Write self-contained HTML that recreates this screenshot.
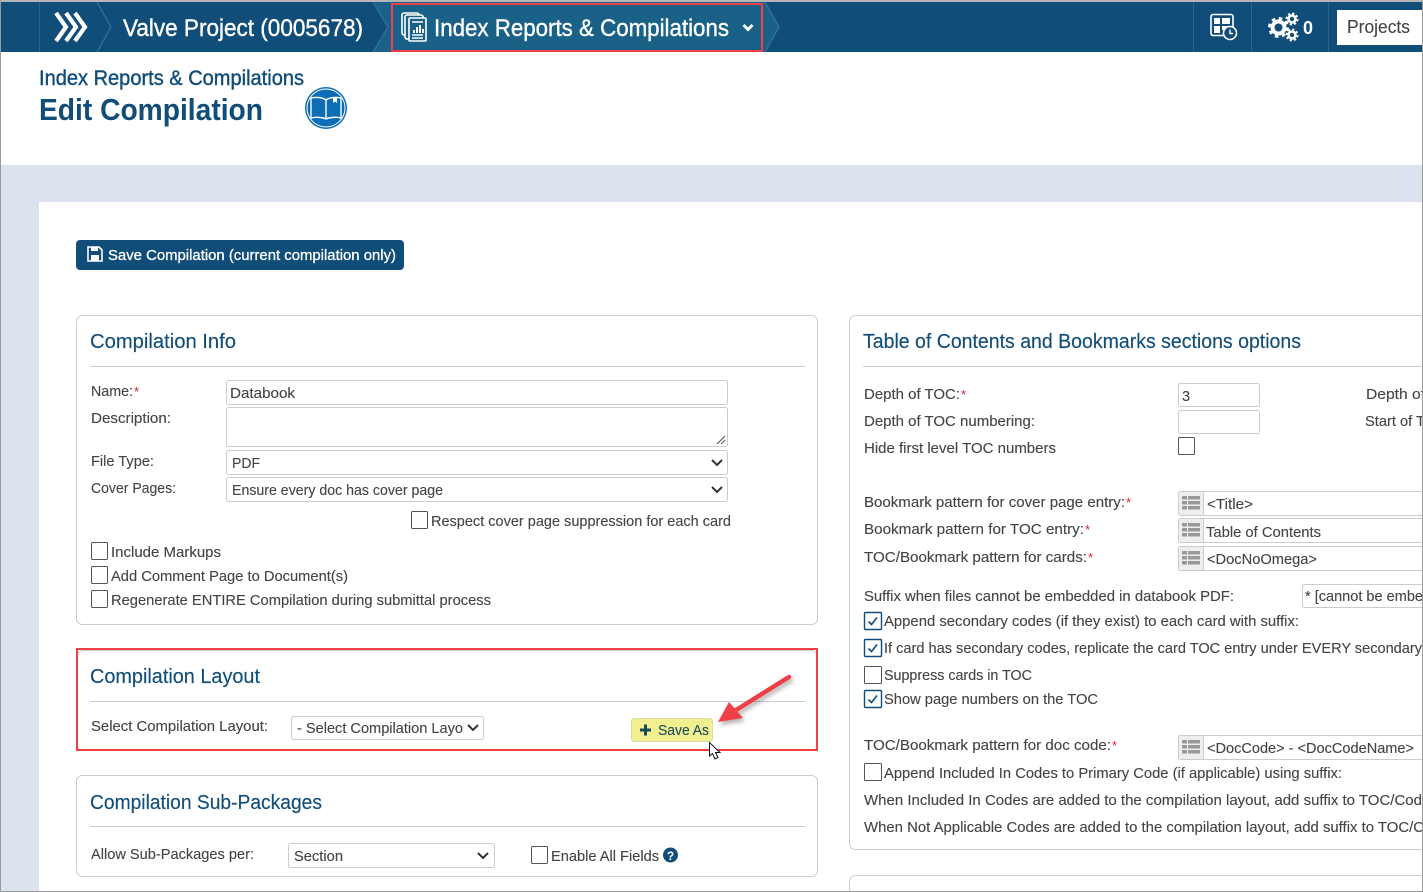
<!DOCTYPE html>
<html lang="en"><head><meta charset="utf-8"><title>Edit Compilation</title>
<style>
html,body{margin:0;padding:0;background:#fff;width:1423px;height:892px;overflow:hidden}
svg{display:block}
text{font-family:"Liberation Sans",Arial,sans-serif;font-size:14.5px;fill:#444;white-space:pre;stroke:#444;stroke-width:.12px}
.t{font-size:20.5px;fill:#114d79;stroke:#114d79;stroke-width:.15px}
.nav{font-size:24.5px;fill:#fff;stroke:#fff;stroke-width:.4px}
.r{fill:#d9232e;stroke:none;font-size:13px}
.i{fill:#fff;stroke:#ccc;stroke-width:1}
.c{fill:#fff;stroke:#555;stroke-width:1}
.k{fill:#fff;stroke:#114d79;stroke-width:1.4}
.h{stroke:#ccc;stroke-width:1}
.card{fill:#fff;stroke:#ccc;stroke-width:1}
.ck{fill:none;stroke:#114d79;stroke-width:1.6}
.ch{fill:none;stroke:#333;stroke-width:2}
</style></head><body>
<svg width="1423" height="892" viewBox="0 0 1423 892" xmlns="http://www.w3.org/2000/svg">
<defs>
<filter id="sh" x="-30%" y="-30%" width="170%" height="170%"><feDropShadow dx="2" dy="3" stdDeviation="2" flood-color="#000" flood-opacity=".3"/></filter>
<g id="ic"><path d="M4 5h5v3.500h-5zM10 5h12v3.500h-12zM4 10h5v3.500h-5zM10 10h12v3.500h-12zM4 15h5v3.500h-5zM10 15h12v3.500h-12z" fill="#999"/></g>
</defs>

<rect width="1423" height="892" fill="#fff"/>
<rect x="0" y="165" width="1423" height="727" fill="#dce3ee"/>
<rect x="39" y="202" width="1384" height="690" fill="#fff"/>

<!-- nav -->
<rect x="0" y="2" width="1423" height="50" fill="#114d79"/>
<path d="M373 2L388 27L373 52H765L779 27L765 2Z" fill="#1a6187"/>
<path d="M39.500 2V52M1193.500 2V52M1251.500 2V52M1328.500 2V52" stroke="#2d6590" stroke-width="1" fill="none"/>
<path d="M97 2L111 27L97 52M373 2L388 27L373 52M765 2L779 27L765 52" stroke="#32719e" stroke-width="1.300" fill="none"/>
<path d="M56 13L66 27L56 41M66 13L76 27L66 41M75 13L85 27L75 41" stroke="#fff" stroke-width="4.200" fill="none"/>
<text class="nav" x="123" y="36" textLength="240" lengthAdjust="spacingAndGlyphs">Valve Project (0005678)</text>
<g fill="#1a6187" stroke="#fff" stroke-width="1.600">
<rect x="402" y="13" width="17" height="22" rx="2"/>
<rect x="405" y="15" width="18" height="24" rx="2"/>
<rect x="409" y="18" width="17" height="23" rx="1"/>
</g>
<path d="M412 22h11M412 35h11M412 38h11" stroke="#fff" stroke-width="1.500"/>
<path d="M413 33v-3h2v3zM416 33v-6h2v6zM419 33v-8h2v8zM422 33v-4h2v4z" fill="#fff"/>
<text class="nav" x="434" y="36" textLength="295" lengthAdjust="spacingAndGlyphs">Index Reports &amp; Compilations</text>
<path d="M743.500 25L748 29.500L752.500 25" stroke="#fff" stroke-width="2.800" fill="none"/>
<rect x="392" y="4" width="370" height="47" fill="none" stroke="#ef4048" stroke-width="2"/>

<!-- nav right -->
<rect x="1211" y="14.500" width="22" height="21" rx="2" fill="none" stroke="#fff" stroke-width="1.600"/>
<path d="M1214 18h6v6h-6zM1222 18h8v6h-8zM1214 26h6v7h-6zM1222 26h5v4h-5z" fill="#fff"/>
<circle cx="1230" cy="33" r="6.500" fill="#114d79" stroke="#fff" stroke-width="1.600"/>
<path d="M1230 29.500V33.500H1233" stroke="#fff" stroke-width="1.400" fill="none"/>
<g fill="none" stroke="#fff">
<circle cx="1278.500" cy="27.500" r="6" stroke-width="4"/>
<circle cx="1278.500" cy="27.500" r="9" stroke-width="3" stroke-dasharray="3.500 3.570"/>
<circle cx="1292" cy="19" r="3.500" stroke-width="2.600"/>
<circle cx="1292" cy="19" r="5.500" stroke-width="2" stroke-dasharray="2.200 2.120"/>
<circle cx="1292" cy="35" r="3.500" stroke-width="2.600"/>
<circle cx="1292" cy="35" r="5.500" stroke-width="2" stroke-dasharray="2.200 2.120"/>
</g>
<text x="1303" y="34" style="font-size:18px;font-weight:bold;fill:#fff;stroke:none" textLength="10" lengthAdjust="spacingAndGlyphs">0</text>
<rect x="1337" y="10" width="86" height="35" fill="#fff"/>
<text x="1347" y="33" style="font-size:18px" textLength="63" lengthAdjust="spacingAndGlyphs">Projects</text>

<!-- page title -->
<text x="39" y="85" style="font-size:21.500px;fill:#114d79;stroke:#114d79;stroke-width:.4px" textLength="265" lengthAdjust="spacingAndGlyphs">Index Reports &amp; Compilations</text>
<text x="39" y="120" style="font-size:31px;font-weight:bold;fill:#114d79;stroke:none" textLength="224" lengthAdjust="spacingAndGlyphs">Edit Compilation</text>
<circle cx="326" cy="108" r="21" fill="#0d6db5"/>
<circle cx="326" cy="108" r="19" fill="none" stroke="#fff" stroke-width="1"/>
<path d="M326 100C322 97 315 97 311 98V118C315 117 322 117 326 119C330 117 337 117 341 118V98C337 97 330 97 326 100V119" fill="none" stroke="#fff" stroke-width="1.400"/>
<path d="M333 98v5l2-1.500 2 1.500v-5" fill="#fff"/>

<!-- save button -->
<rect x="76" y="240" width="328" height="30" rx="4" fill="#114d79"/>
<path d="M88 247h11l3 3v11h-14z" fill="none" stroke="#fff" stroke-width="1.600"/>
<path d="M91 247h7v4h-7zM91 255h8v6h-8z" fill="#fff"/>
<text x="108" y="260" style="font-size:15px;fill:#fff;stroke:#fff;stroke-width:.3px" textLength="288" lengthAdjust="spacingAndGlyphs">Save Compilation (current compilation only)</text>

<!-- card 1 -->
<rect class="card" x="76.500" y="315.500" width="741" height="309" rx="6"/>
<text class="t" x="90" y="348" textLength="146" lengthAdjust="spacingAndGlyphs">Compilation Info</text>
<line class="h" x1="90" x2="805" y1="366.500" y2="366.500"/>
<text x="91" y="396" textLength="42" lengthAdjust="spacingAndGlyphs">Name:</text><text class="r" x="134" y="396">*</text>
<text x="91" y="423" textLength="80" lengthAdjust="spacingAndGlyphs">Description:</text>
<text x="91" y="466" textLength="63" lengthAdjust="spacingAndGlyphs">File Type:</text>
<text x="91" y="493" style="font-size:15px" textLength="85" lengthAdjust="spacingAndGlyphs">Cover Pages:</text>
<rect class="i" x="226.500" y="380.500" width="501" height="24" rx="2"/>
<text x="230" y="398" textLength="65" lengthAdjust="spacingAndGlyphs">Databook</text>
<rect class="i" x="226.500" y="407.500" width="501" height="39" rx="2"/>
<path d="M717 444L725 436M721 444L725 440" stroke="#555" stroke-width="1"/>
<rect class="i" x="226.500" y="450.500" width="501" height="24" rx="2"/>
<text x="232" y="468" textLength="28" lengthAdjust="spacingAndGlyphs">PDF</text>
<path class="ch" d="M712 460L717 465L722 460"/>
<rect class="i" x="226.500" y="477.500" width="501" height="24" rx="2"/>
<text x="232" y="495" textLength="211" lengthAdjust="spacingAndGlyphs">Ensure every doc has cover page</text>
<path class="ch" d="M712 487L717 492L722 487"/>
<rect class="c" x="411.500" y="511.500" width="16" height="17" rx="1"/>
<text x="431" y="526" textLength="300" lengthAdjust="spacingAndGlyphs">Respect cover page suppression for each card</text>
<rect class="c" x="91.500" y="542.500" width="16" height="17" rx="1"/>
<text x="111" y="557" textLength="110" lengthAdjust="spacingAndGlyphs">Include Markups</text>
<rect class="c" x="91.500" y="566.500" width="16" height="17" rx="1"/>
<text x="111" y="581" textLength="237" lengthAdjust="spacingAndGlyphs">Add Comment Page to Document(s)</text>
<rect class="c" x="91.500" y="590.500" width="16" height="17" rx="1"/>
<text x="111" y="605" textLength="380" lengthAdjust="spacingAndGlyphs">Regenerate ENTIRE Compilation during submittal process</text>

<!-- card 2 -->
<rect class="card" x="77.500" y="650.500" width="740" height="100" rx="6"/>
<text class="t" x="90" y="683" textLength="170" lengthAdjust="spacingAndGlyphs">Compilation Layout</text>
<line class="h" x1="90" x2="805" y1="701.500" y2="701.500"/>
<text x="91" y="731" textLength="177" lengthAdjust="spacingAndGlyphs">Select Compilation Layout:</text>
<rect class="i" x="291.500" y="716.500" width="192" height="23" rx="2"/>
<text x="297" y="733" textLength="166" lengthAdjust="spacingAndGlyphs">- Select Compilation Layo</text>
<path class="ch" d="M468 725L473 730L478 725"/>
<rect x="631.500" y="718.500" width="81" height="23" rx="3" fill="#f2ef8f" stroke="#dcdca0"/>
<path d="M645.500 724.500V735.500M640 730H651" stroke="#114d5c" stroke-width="3"/>
<text x="658" y="735" style="font-size:15px;fill:#1b5060;stroke:#1b5060" textLength="51" lengthAdjust="spacingAndGlyphs">Save As</text>
<rect x="77" y="649" width="740" height="101" fill="none" stroke="#ef4048" stroke-width="2"/>
<g filter="url(#sh)"><path d="M789 677L733 712" stroke="#ef4048" stroke-width="4.500" stroke-linecap="round" fill="none"/><path d="M718 722L729 702L743 718Z" fill="#ef4048"/></g>
<path d="M709.500 742.500V756L712.500 753.500L715 759L718 757.500L715.500 752.500L720 752.500Z" fill="#fff" stroke="#111" stroke-width="1"/>

<!-- card 3 -->
<rect class="card" x="76.500" y="775.500" width="741" height="101" rx="6"/>
<text class="t" x="90" y="809" textLength="232" lengthAdjust="spacingAndGlyphs">Compilation Sub-Packages</text>
<line class="h" x1="90" x2="805" y1="826.500" y2="826.500"/>
<text x="91" y="859" textLength="163" lengthAdjust="spacingAndGlyphs">Allow Sub-Packages per:</text>
<rect class="i" x="288.500" y="843.500" width="206" height="24" rx="2"/>
<text x="294" y="861" textLength="49" lengthAdjust="spacingAndGlyphs">Section</text>
<path class="ch" d="M478 853L483 858L488 853"/>
<rect class="c" x="531.500" y="846.500" width="16" height="17" rx="1"/>
<text x="551" y="861" textLength="108" lengthAdjust="spacingAndGlyphs">Enable All Fields</text>
<circle cx="670.500" cy="855" r="7.500" fill="#114d79"/>
<text x="670.500" y="860" text-anchor="middle" style="font-size:12px;font-weight:bold;fill:#fff;stroke:none">?</text>

<!-- right card -->
<rect class="card" x="849.500" y="315.500" width="600" height="534" rx="6"/>
<rect class="card" x="849.500" y="875.500" width="600" height="60" rx="6"/>
<text class="t" x="863" y="348" textLength="438" lengthAdjust="spacingAndGlyphs">Table of Contents and Bookmarks sections options</text>
<line class="h" x1="863" x2="1423" y1="366.500" y2="366.500"/>

<text x="864" y="399" textLength="96" lengthAdjust="spacingAndGlyphs">Depth of TOC:</text><text class="r" x="961" y="399">*</text>
<text x="864" y="426" textLength="171" lengthAdjust="spacingAndGlyphs">Depth of TOC numbering:</text>
<text x="864" y="453" textLength="192" lengthAdjust="spacingAndGlyphs">Hide first level TOC numbers</text>
<rect class="i" x="1178.500" y="383.500" width="81" height="23" rx="2"/>
<text x="1182" y="401" style="font-size:14.500px">3</text>
<rect class="i" x="1178.500" y="410.500" width="81" height="23" rx="2"/>
<rect class="c" x="1178.500" y="437.500" width="16" height="17" rx="1"/>
<text x="1366" y="399" textLength="59" lengthAdjust="spacingAndGlyphs">Depth of</text>
<text x="1365" y="426" textLength="60" lengthAdjust="spacingAndGlyphs">Start of T</text>

<text x="864" y="507" textLength="261" lengthAdjust="spacingAndGlyphs">Bookmark pattern for cover page entry:</text><text class="r" x="1126" y="507">*</text>
<text x="864" y="534" textLength="220" lengthAdjust="spacingAndGlyphs">Bookmark pattern for TOC entry:</text><text class="r" x="1085" y="534">*</text>
<text x="864" y="562" textLength="223" lengthAdjust="spacingAndGlyphs">TOC/Bookmark pattern for cards:</text><text class="r" x="1088" y="562">*</text>

<rect class="i" x="1178.500" y="491.500" width="260" height="24" rx="2"/>
<rect x="1179" y="492" width="24" height="23" fill="#eee"/><line x1="1203.500" x2="1203.500" y1="492" y2="515" stroke="#ccc"/>
<use href="#ic" x="1178" y="491"/>
<text x="1207" y="509" textLength="46" lengthAdjust="spacingAndGlyphs">&lt;Title&gt;</text>

<rect class="i" x="1178.500" y="518.500" width="260" height="24" rx="2"/>
<rect x="1179" y="519" width="24" height="23" fill="#eee"/><line x1="1203.500" x2="1203.500" y1="519" y2="542" stroke="#ccc"/>
<use href="#ic" x="1178" y="518"/>
<text x="1206" y="537" textLength="115" lengthAdjust="spacingAndGlyphs">Table of Contents</text>

<rect class="i" x="1178.500" y="546.500" width="260" height="24" rx="2"/>
<rect x="1179" y="547" width="24" height="23" fill="#eee"/><line x1="1203.500" x2="1203.500" y1="547" y2="570" stroke="#ccc"/>
<use href="#ic" x="1178" y="546"/>
<text x="1207" y="564" textLength="110" lengthAdjust="spacingAndGlyphs">&lt;DocNoOmega&gt;</text>

<text x="864" y="601" textLength="370" lengthAdjust="spacingAndGlyphs">Suffix when files cannot be embedded in databook PDF:</text>
<rect class="i" x="1302.500" y="584.500" width="140" height="23" rx="2"/>
<text x="1305" y="601" textLength="118" lengthAdjust="spacingAndGlyphs">* [cannot be embe</text>

<rect class="k" x="864.500" y="612.500" width="17" height="17" rx="1"/><path class="ck" d="M868.500 621.500L871.500 624.500L877 617.500"/>
<text x="884" y="626" textLength="415" lengthAdjust="spacingAndGlyphs">Append secondary codes (if they exist) to each card with suffix:</text>
<rect class="k" x="864.500" y="639.500" width="17" height="17" rx="1"/><path class="ck" d="M868.500 648.500L871.500 651.500L877 644.500"/>
<text x="884" y="653" textLength="538" lengthAdjust="spacingAndGlyphs">If card has secondary codes, replicate the card TOC entry under EVERY secondary</text>
<rect class="c" x="864.500" y="666.500" width="17" height="17" rx="1"/>
<text x="884" y="680" textLength="148" lengthAdjust="spacingAndGlyphs">Suppress cards in TOC</text>
<rect class="k" x="864.500" y="690.500" width="17" height="17" rx="1"/><path class="ck" d="M868.500 699.500L871.500 702.500L877 695.500"/>
<text x="884" y="704" textLength="214" lengthAdjust="spacingAndGlyphs">Show page numbers on the TOC</text>

<text x="864" y="750" textLength="247" lengthAdjust="spacingAndGlyphs">TOC/Bookmark pattern for doc code:</text><text class="r" x="1112" y="750">*</text>
<rect class="i" x="1178.500" y="735.500" width="260" height="24" rx="2"/>
<rect x="1179" y="736" width="24" height="23" fill="#eee"/><line x1="1203.500" x2="1203.500" y1="736" y2="759" stroke="#ccc"/>
<use href="#ic" x="1178" y="735"/>
<text x="1207" y="753" textLength="207" lengthAdjust="spacingAndGlyphs">&lt;DocCode&gt; - &lt;DocCodeName&gt;</text>

<rect class="c" x="864.500" y="763.500" width="17" height="17" rx="1"/>
<text x="884" y="778" textLength="458" lengthAdjust="spacingAndGlyphs">Append Included In Codes to Primary Code (if applicable) using suffix:</text>
<text x="864" y="805" textLength="558" lengthAdjust="spacingAndGlyphs">When Included In Codes are added to the compilation layout, add suffix to TOC/Cod</text>
<text x="864" y="832" textLength="560" lengthAdjust="spacingAndGlyphs">When Not Applicable Codes are added to the compilation layout, add suffix to TOC/C</text>

<!-- frame -->
<rect x="0" y="0" width="1423" height="2" fill="#b5b5b5"/>
<rect x="0" y="0" width="1" height="892" fill="#9a9a9a"/>
<rect x="1422" y="0" width="1" height="892" fill="#9a9a9a"/>
<rect x="0" y="891" width="1423" height="1" fill="#9a9a9a"/>
</svg>
</body></html>
